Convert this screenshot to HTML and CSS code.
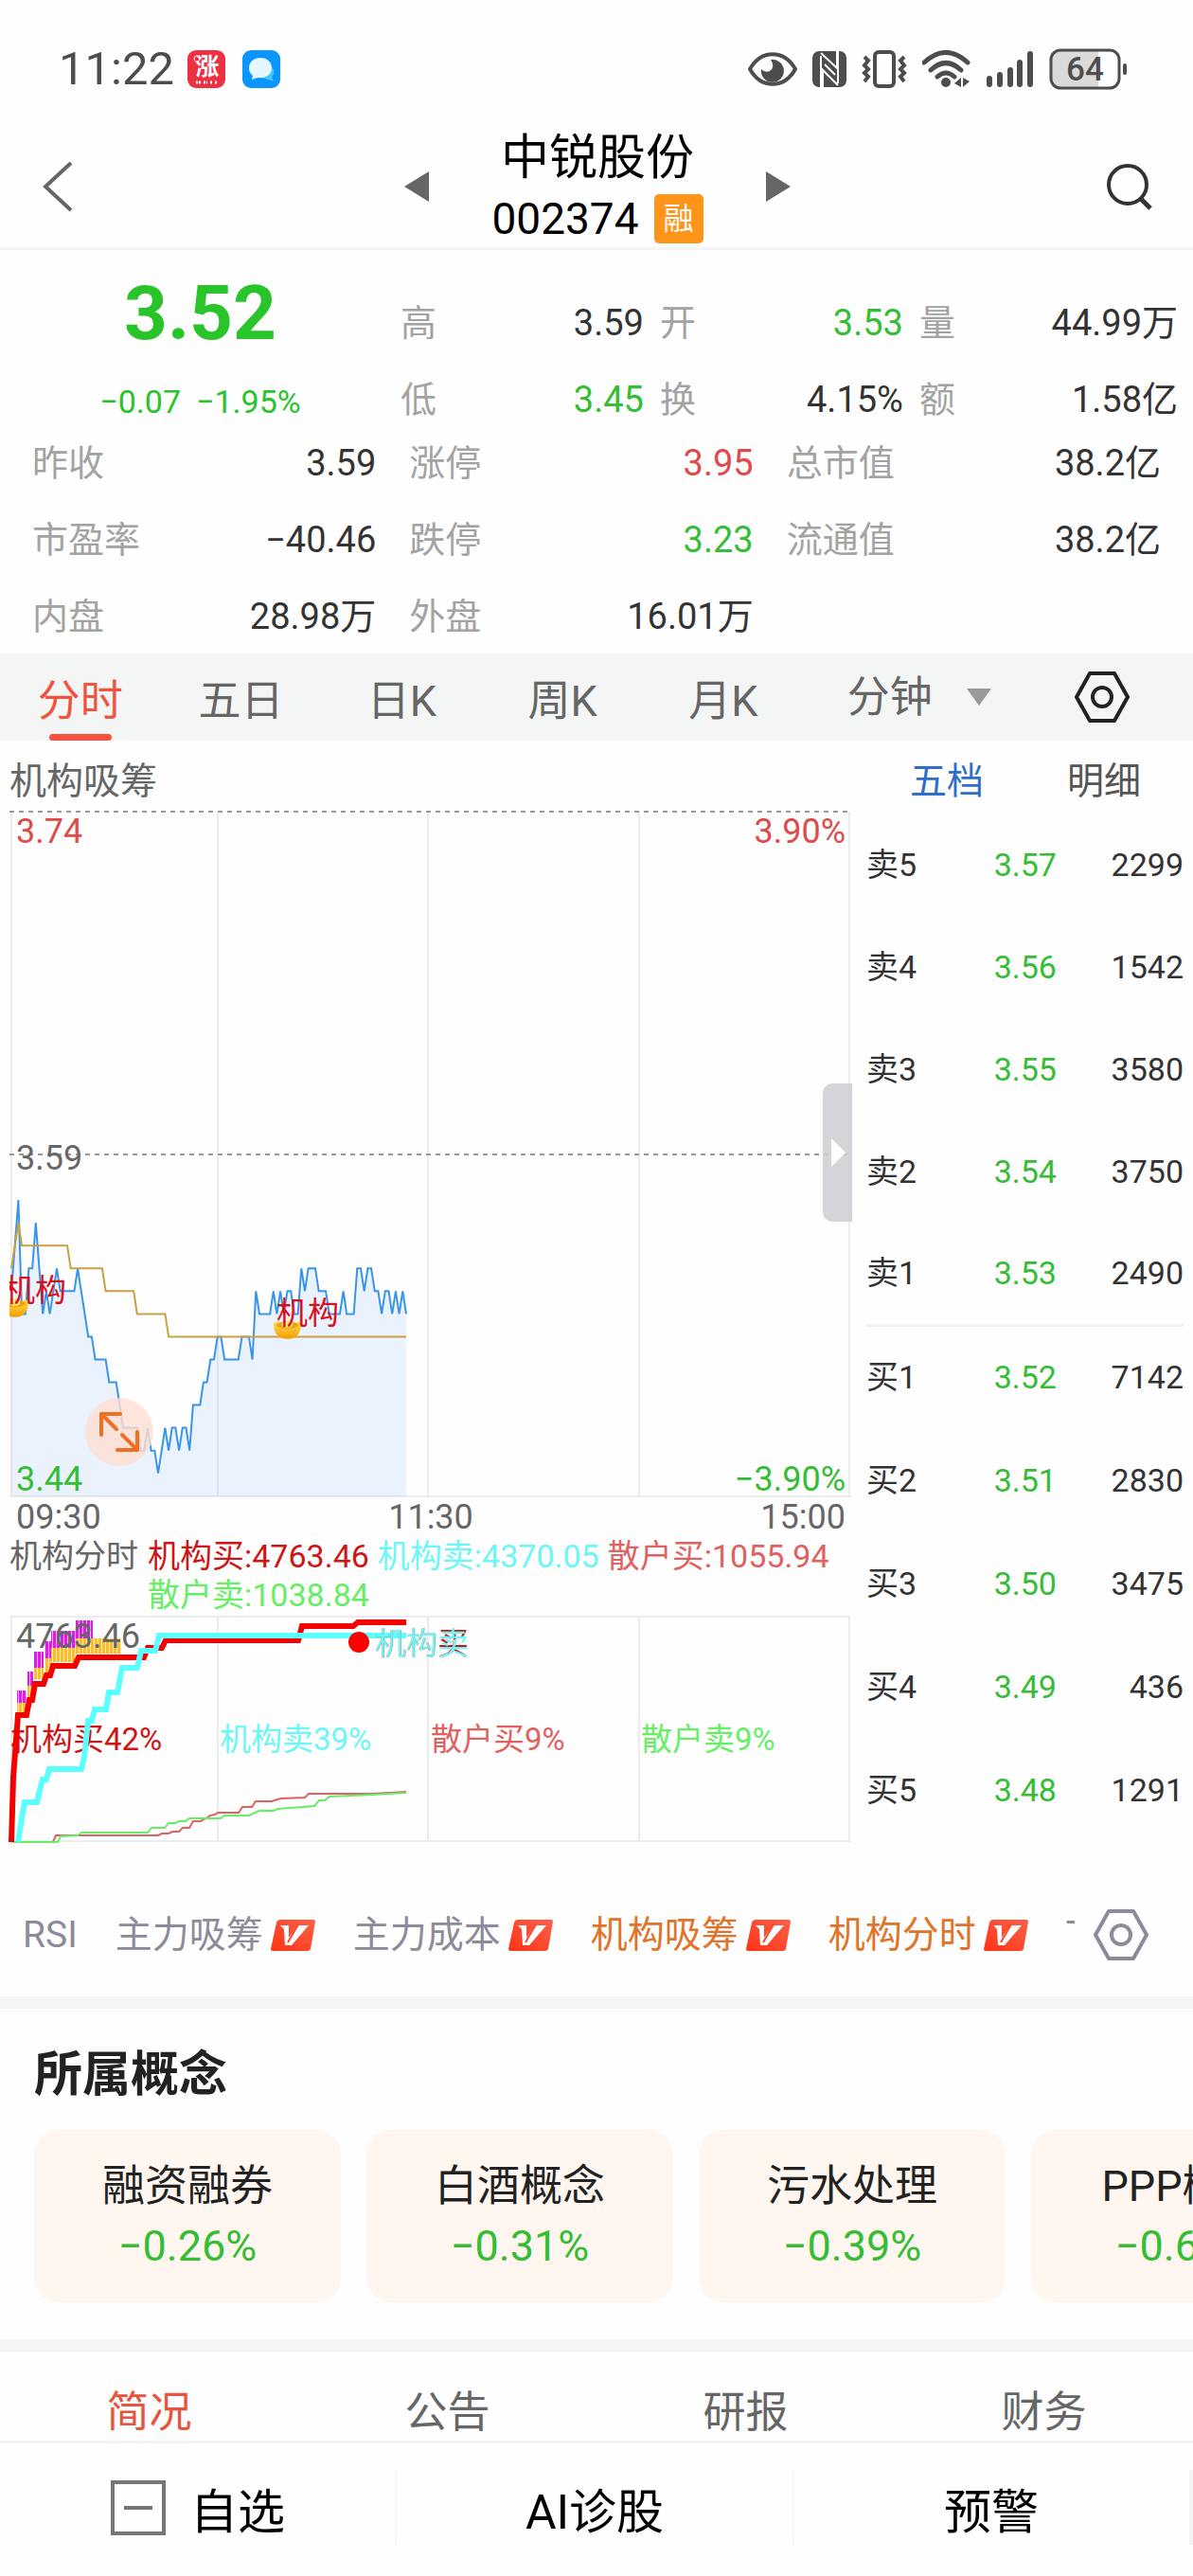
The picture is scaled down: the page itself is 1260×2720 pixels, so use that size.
FILE: index.html
```html
<!DOCTYPE html>
<html lang="zh-CN">
<head>
    <meta charset="UTF-8">
    <meta name="viewport" content="width=device-width, initial-scale=1.0">
    <title>中锐股份 002374</title>
    <link rel="stylesheet" href="styles.css">
</head>
<body>
    <svg width="0" height="0" class="defs" aria-hidden="true">
        <defs>
            <linearGradient id="vipFill" x1="0" y1="1" x2="1" y2="0">
                <stop offset="0" stop-color="#ff3315"/>
                <stop offset="1" stop-color="#fb6148"/>
            </linearGradient>
            <linearGradient id="gold" x1="0" y1="0" x2="0" y2="1">
                <stop offset="0" stop-color="#ffe04a"/>
                <stop offset="1" stop-color="#f59a00"/>
            </linearGradient>
            <symbol id="vip" viewBox="0 0 47 33">
                <path d="M10 0H45Q47 0 47 2L42 31Q41 33 39 33H2Q0 33 0 31L6 3Q7 0 10 0Z" fill="url(#vipFill)"/>
                <path d="M10 6H19V19L28 6H40L22 27H15L14 10Z" fill="#fff"/>
                <path d="M29 5L18 24" stroke="#fd452b" stroke-width="2"/>
            </symbol>
            <symbol id="hexagon" viewBox="0 0 60 56">
                <path d="M17 3H43L57 28L43 53H17L3 28Z" fill="none" stroke="currentColor" stroke-width="4" stroke-linejoin="round"/>
                <circle cx="30" cy="28" r="10" fill="none" stroke="currentColor" stroke-width="4"/>
            </symbol>
            <symbol id="ingot" viewBox="0 0 32 22">
                <path d="M1 4Q3 1 8 4H24Q29 1 31 4Q31 21 16 21Q1 21 1 4Z" fill="url(#gold)"/>
                <ellipse cx="16" cy="6" rx="12" ry="4" fill="#f0a312"/>
                <ellipse cx="16" cy="5" rx="6" ry="4" fill="#ffe873"/>
            </symbol>
        </defs>
    </svg>

    <div class="status-bar">
        <span class="status-time">11:22</span>
        <svg class="app-icon" viewBox="0 0 40 40" aria-hidden="true">
            <rect width="40" height="40" rx="9" fill="#ee3142"/>
            <text x="21" y="26" class="app-char">涨</text>
            <path d="M9 34H14M17 34H21M24 34H27M29 34H32" stroke="#fff" stroke-width="3" stroke-dasharray="2 1"/>
            <circle cx="10" cy="9" r="3" fill="none" stroke="#fff"/>
        </svg>
        <svg class="app-icon" viewBox="0 0 40 40" aria-hidden="true">
            <rect width="40" height="40" rx="9" fill="#0a95ff"/>
            <path d="M21 29Q31 32 33 33L31 28Q36 23 31 18Z" fill="#3fc8f8"/>
            <path d="M19 8C11 8 7 13 7 19C7 23 9 25 11 27L10 31L16 29C26 30 31 25 31 19C31 12 26 8 19 8Z" fill="#e4f7ff"/>
        </svg>
        <div class="status-icons">
            <svg width="52" height="36" viewBox="0 0 52 36" aria-hidden="true">
                <path d="M2 18C14-3 38-3 50 18C38 39 14 39 2 18Z" fill="none" stroke="#4d4d4d" stroke-width="4"/>
                <path d="M24 8A12 12 0 1 1 14 18Q18 22 23 20Q29 16 24 8Z" fill="#4d4d4d"/>
            </svg>
            <svg width="36" height="38" viewBox="0 0 36 38" aria-hidden="true">
                <rect width="36" height="38" rx="7" fill="#4d4d4d"/>
                <path d="M9 38V5M9 2L26 18V0M27 36L11 20V38M27 0V34" fill="none" stroke="#fefefe" stroke-width="2"/>
                <path d="M13 14L24 25" stroke="#fefefe" stroke-width="2"/>
            </svg>
            <svg width="48" height="40" viewBox="0 0 48 40" aria-hidden="true">
                <rect x="14" y="2" width="20" height="36" rx="4" fill="none" stroke="#4d4d4d" stroke-width="4"/>
                <path d="M3 7L7 11L3 16L7 20L3 24L7 28L3 33M45 7L41 11L45 16L41 20L45 24L41 28L45 33" fill="none" stroke="#4d4d4d" stroke-width="4"/>
            </svg>
            <svg width="52" height="40" viewBox="0 0 52 40" aria-hidden="true">
                <path d="M2 13Q25-8 48 13M9 21Q25 6 41 21M16 28Q25 20 34 28" fill="none" stroke="#4d4d4d" stroke-width="5" stroke-linecap="round"/>
                <circle cx="25" cy="34" r="5" fill="#4d4d4d"/>
                <path d="M34 35L41 29V39ZM50 33L43 29V39Z" fill="#4d4d4d"/>
            </svg>
            <svg width="50" height="40" viewBox="0 0 50 40" aria-hidden="true">
                <path d="M3 30V36M14 26V36M25 21V36M35 13V36M46 4V36" stroke="#4d4d4d" stroke-width="6" stroke-linecap="round"/>
            </svg>
            <svg width="84" height="44" viewBox="0 0 84 44" aria-hidden="true">
                <path d="M10 2H52V42H10Q2 42 2 34V10Q2 2 10 2Z" fill="#dadada"/>
                <rect x="2" y="2" width="72" height="40" rx="10" fill="none" stroke="#4d4d4d" stroke-width="3"/>
                <path d="M80 18V26" stroke="#4d4d4d" stroke-width="4" stroke-linecap="round"/>
                <text x="38" y="34" class="battery-text">64</text>
            </svg>
        </div>
    </div>

    <header class="header">
        <button class="icon-btn" aria-label="返回">
            <svg width="34" height="54" viewBox="0 0 34 54"><path d="M31 2L4 27L31 52" fill="none" stroke="#666" stroke-width="4"/></svg>
        </button>
        <div class="header-center">
            <button class="icon-btn" aria-label="上一只">
                <svg width="26" height="32" viewBox="0 0 26 32"><path d="M0 16L26 0V32Z" fill="#666"/></svg>
            </button>
            <div class="header-title">
                <h1>中锐股份</h1>
                <div class="stock-code">002374 <span class="rong">融</span></div>
            </div>
            <button class="icon-btn" aria-label="下一只">
                <svg width="26" height="32" viewBox="0 0 26 32"><path d="M26 16L0 0V32Z" fill="#666"/></svg>
            </button>
        </div>
        <button class="icon-btn search-btn" aria-label="搜索">
            <svg width="50" height="52" viewBox="0 0 50 52"><circle cx="23" cy="24" r="20" fill="none" stroke="#333" stroke-width="4"/><path d="M36 38L47 49" stroke="#333" stroke-width="5"/></svg>
        </button>
    </header>

    <section class="quote">
        <div class="quote-top">
            <div class="price-box">
                <div class="price">3.52</div>
                <div class="change"><span>−0.07</span><span>−1.95%</span></div>
            </div>
            <dl class="stats stats-top">
                <div><dt>高</dt><dd>3.59</dd></div>
                <div><dt>开</dt><dd class="down">3.53</dd></div>
                <div><dt>量</dt><dd>44.99万</dd></div>
                <div><dt>低</dt><dd class="down">3.45</dd></div>
                <div><dt>换</dt><dd>4.15%</dd></div>
                <div><dt>额</dt><dd>1.58亿</dd></div>
            </dl>
        </div>
        <dl class="stats stats-more">
            <div><dt>昨收</dt><dd>3.59</dd></div>
            <div><dt>涨停</dt><dd class="up">3.95</dd></div>
            <div><dt>总市值</dt><dd>38.2亿</dd></div>
            <div><dt>市盈率</dt><dd>−40.46</dd></div>
            <div><dt>跌停</dt><dd class="down">3.23</dd></div>
            <div><dt>流通值</dt><dd>38.2亿</dd></div>
            <div><dt>内盘</dt><dd>28.98万</dd></div>
            <div><dt>外盘</dt><dd>16.01万</dd></div>
        </dl>
    </section>

    <nav class="period-tabs">
        <button class="active">分时</button>
        <button>五日</button>
        <button>日K</button>
        <button>周K</button>
        <button>月K</button>
        <div class="minute-select">
            <select aria-label="分钟周期">
                <option>分钟</option>
            </select>
            <svg width="26" height="18" viewBox="0 0 26 18" aria-hidden="true"><path d="M0 0H26L13 18Z" fill="#999"/></svg>
        </div>
        <button class="period-setting" aria-label="设置"><svg width="60" height="56"><use href="#hexagon"/></svg></button>
    </nav>

    <main class="trade">
        <div class="charts">
            <h2 class="chart-title">机构吸筹</h2>
            <div class="main-chart">
                <svg viewBox="0 0 900 773" role="img" aria-label="分时走势">
                    <path class="grid-line" d="M12 7V730M230 7V730M452 7V730M675 7V730M897 7V730M10 730H899"/>
                    <path class="dash-line" d="M10 7H897M10 369H897"/>
                    <path id="priceArea" class="price-area"/>
                    <path id="priceLine" class="price-line"/>
                    <path id="avgLine" class="avg-line"/>
                    <svg x="10" y="480" width="100" height="80" viewBox="10 480 100 80">
                        <use href="#ingot" x="0" y="520" width="31" height="22"/>
                        <text x="4" y="524" class="mark">机构</text>
                    </svg>
                    <use href="#ingot" x="288" y="543" width="31" height="22"/>
                    <text x="292" y="548" class="mark">机构</text>
                    <text x="17" y="40" class="axis up-text">3.74</text>
                    <text x="893" y="40" class="axis up-text end">3.90%</text>
                    <text x="17" y="385" class="axis">3.59</text>
                    <text x="17" y="724" class="axis down-text">3.44</text>
                    <text x="893" y="724" class="axis down-text end">−3.90%</text>
                    <text x="17" y="764" class="axis">09:30</text>
                    <text x="455" y="764" class="axis middle">11:30</text>
                    <text x="893" y="764" class="axis end">15:00</text>
                </svg>
                <button class="expand-btn" aria-label="全屏">
                    <svg width="44" height="44" viewBox="0 0 44 44"><path d="M3 25V3H23M3 3L19 19M41 22V41H20M25 25L41 41" fill="none" stroke="#ee7020" stroke-width="4" stroke-linecap="round" stroke-linejoin="round"/></svg>
                </button>
                <button class="fold-btn" aria-label="收起盘口">
                    <svg width="15" height="30" viewBox="0 0 15 30"><path d="M0 0L15 15L0 30Z" fill="#fff"/></svg>
                </button>
            </div>
            <div class="legend">
                <span class="legend-name">机构分时</span>
                <div class="legend-values">
                    <span class="inst-buy">机构买:4763.46</span>
                    <span class="inst-sell">机构卖:4370.05</span>
                    <span class="retail-buy">散户买:1055.94</span>
                    <span class="retail-sell">散户卖:1038.84</span>
                </div>
            </div>
            <svg class="sub-chart" viewBox="0 0 900 245" role="img" aria-label="机构分时">
                <defs>
                    <pattern id="yellowBars" width="4" height="10" patternUnits="userSpaceOnUse">
                        <rect width="4" height="10" fill="#fff0b8"/><rect width="3" height="10" fill="#f6bf32"/>
                    </pattern>
                    <pattern id="pinkBars" width="4" height="10" patternUnits="userSpaceOnUse">
                        <rect width="4" height="10" fill="#fbb8ff"/><rect width="3" height="10" fill="#d91fe0"/>
                    </pattern>
                </defs>
                <path class="grid-line" d="M10 2H899M12 2V239M230 2V239M452 2V239M675 2V239M897 2V239M10 239H899"/>
                <path fill="url(#yellowBars)" d="M18 93H28V103H18ZM29 75H35V87H29ZM36 56H46V68H36ZM47 46H54V61H47ZM54 35H80V50H54ZM80 25H128V41H80Z"/>
                <path fill="url(#pinkBars)" d="M18 80H28V93H18ZM29 60H35V75H29ZM36 39H46V56H36ZM47 28H54V46H47ZM54 17H80V35H54ZM80 6H98V25H80Z"/>
                <text x="11" y="143" class="share inst-buy">机构买42%</text>
                <text x="232" y="143" class="share inst-sell">机构卖39%</text>
                <text x="455" y="143" class="share retail-buy">散户买9%</text>
                <text x="677" y="143" class="share retail-sell">散户卖9%</text>
                <path class="line-thin retail-buy" d="M12 240H56L59 233H167L171 231H178L182 229H189L193 225H200L204 218H212L215 216L218 215L222 212L227 211L230 209H252L256 203H266L270 197H287L293 195L297 194L322 193L326 189H393L429 187"/>
                <path class="line-thin retail-sell" d="M12 240H61L64 234L82 233L86 230H156L160 225H174L178 220H185L189 218H196L200 215H233L237 212H263L274 207H289L293 205L320 203L332 202L337 196H343L348 192L393 190L429 188"/>
                <path class="line-thick red" d="M12 240L14 172L19 106H28L31 90H34L37 73H46L49 64H53L56 54H79L83 45H152L156 35H171L175 27H315L319 12H373L378 8H429"/>
                <path class="line-thick cyan" d="M19 240L23 215L26 198H39L42 185L45 174H49L52 163H86L89 150L93 112H97L100 100H112L115 82H124L129 56H145L149 38H164L168 22H429"/>
                <text x="17" y="35" class="axis">4763.46</text>
                <circle cx="379" cy="29" r="11" fill="#f00"/>
                <text x="396" y="42" class="share inst-buy">机构买</text>
                <text x="396" y="42" class="share inst-sell">机构卖</text>
            </svg>
        </div>

        <aside class="book">
            <div class="book-tabs">
                <button class="active">五档</button>
                <button>明细</button>
            </div>
            <table>
                <tbody class="asks">
                    <tr><th>卖5</th><td class="down">3.57</td><td>2299</td></tr>
                    <tr><th>卖4</th><td class="down">3.56</td><td>1542</td></tr>
                    <tr><th>卖3</th><td class="down">3.55</td><td>3580</td></tr>
                    <tr><th>卖2</th><td class="down">3.54</td><td>3750</td></tr>
                    <tr><th>卖1</th><td class="down">3.53</td><td>2490</td></tr>
                </tbody>
                <tbody class="bids">
                    <tr><th>买1</th><td class="down">3.52</td><td>7142</td></tr>
                    <tr><th>买2</th><td class="down">3.51</td><td>2830</td></tr>
                    <tr><th>买3</th><td class="down">3.50</td><td>3475</td></tr>
                    <tr><th>买4</th><td class="down">3.49</td><td>436</td></tr>
                    <tr><th>买5</th><td class="down">3.48</td><td>1291</td></tr>
                </tbody>
            </table>
        </aside>
    </main>

    <nav class="indicators">
        <div class="indicator-list">
            <button>RSI</button>
            <button>主力吸筹<svg width="47" height="33"><use href="#vip"/></svg></button>
            <button>主力成本<svg width="47" height="33"><use href="#vip"/></svg></button>
            <button class="active">机构吸筹<svg width="47" height="33"><use href="#vip"/></svg></button>
            <button class="active">机构分时<svg width="47" height="33"><use href="#vip"/></svg></button>
            <button>T</button>
        </div>
        <button class="icon-btn indicator-setting" aria-label="指标设置"><svg width="60" height="56"><use href="#hexagon"/></svg></button>
    </nav>

    <section class="concepts">
        <h2>所属概念</h2>
        <div class="concept-list">
            <a href="#" class="concept"><span>融资融券</span><span class="rate">−0.26%</span></a>
            <a href="#" class="concept"><span>白酒概念</span><span class="rate">−0.31%</span></a>
            <a href="#" class="concept"><span>污水处理</span><span class="rate">−0.39%</span></a>
            <a href="#" class="concept"><span>PPP概念</span><span class="rate">−0.60%</span></a>
        </div>
    </section>

    <nav class="info-tabs">
        <button class="active">简况</button>
        <button>公告</button>
        <button>研报</button>
        <button>财务</button>
    </nav>

    <footer class="bottom-bar">
        <button>
            <svg width="58" height="58" viewBox="0 0 58 58" aria-hidden="true"><path d="M2 2H56V56H2ZM14 29H44" fill="none" stroke="#777" stroke-width="4"/></svg>
            自选
        </button>
        <button>AI诊股</button>
        <button>预警</button>
    </footer>

    <script src="chart.js"></script>
</body>
</html>
```

FILE: styles.css
```css
* {
    box-sizing: border-box;
}
body {
    margin: 0;
    background-color: #fefefe;
    color: #333;
    font-family: Roboto, "Noto Sans CJK SC", sans-serif;
    font-size: 38px;
    overflow-x: hidden;
}
h1, h2, dl, dd {
    margin: 0;
    font-weight: 400;
}
button, select {
    padding: 0;
    border: none;
    background: none;
    color: inherit;
    font: inherit;
    cursor: pointer;
}
svg {
    display: block;
    flex-shrink: 0;
}
.defs {
    position: absolute;
}
.icon-btn {
    display: flex;
}
.up {
    color: #dd4b4b;
}
.down {
    color: #35bd35;
}

/* status bar */
.status-bar {
    display: flex;
    align-items: center;
    height: 110px;
    padding: 36px 68px 0 62px;
}
.status-time {
    margin-right: 14px;
    font-size: 49px;
    line-height: 48px;
    color: #4d4d4d;
}
.app-icon {
    width: 40px;
    height: 40px;
    margin-right: 18px;
}
.app-char {
    fill: #fff;
    font-size: 25px;
    font-weight: 700;
    text-anchor: middle;
}
.status-icons {
    display: flex;
    align-items: center;
    gap: 16px;
    margin-left: auto;
}
.battery-text {
    fill: #4d4d4d;
    font-size: 35px;
    font-weight: 500;
    text-anchor: middle;
}

/* header */
.header {
    display: grid;
    grid-template-columns: 1fr auto 1fr;
    align-items: center;
    padding: 27px 42px 4px 44px;
    border-bottom: 3px solid #f3f5f5;
    color: #000;
}
.header-center {
    display: flex;
    align-items: center;
    gap: 66px;
}
.header-title {
    display: flex;
    flex-direction: column;
    align-items: center;
    gap: 8px;
}
.header-title h1 {
    font-size: 51px;
    line-height: 60px;
}
.stock-code {
    display: flex;
    gap: 16px;
    font-size: 46px;
    line-height: 52px;
}
.rong {
    width: 52px;
    border-radius: 5px;
    background-color: #ff9518;
    color: #fff;
    font-size: 32px;
    text-align: center;
}
.search-btn {
    justify-self: end;
}

/* quote */
.quote {
    padding: 27px 0 11px;
}
.quote-top {
    display: flex;
    align-items: flex-end;
    padding-right: 16px;
}
.price-box {
    flex: 0 0 34%;
    padding-bottom: 6px;
    text-align: center;
    color: #29c429;
}
.price {
    font-size: 80px;
    font-weight: 700;
    line-height: 80px;
    margin-bottom: 33px;
}
.change {
    display: flex;
    justify-content: center;
    gap: 16px;
    font-size: 34px;
    line-height: 40px;
}
.stats {
    display: grid;
    line-height: 56px;
}
.stats > div {
    display: flex;
    justify-content: space-between;
}
.stats dt {
    color: #a3a3a3;
}
.stats-top {
    flex: 1;
    grid-template-columns: 256fr 256fr 272fr;
    gap: 25px 17px;
}
.stats-more {
    grid-template-columns: 363fr 363fr 395fr;
    gap: 25px 35px;
    margin-top: 11px;
    padding: 0 34px;
}

/* period tabs */
.period-tabs {
    display: flex;
    align-items: stretch;
    height: 92px;
    padding-right: 66px;
    background-color: #f4f6f6;
    color: #666;
    font-size: 45px;
}
.period-tabs > button {
    position: relative;
    flex: 171;
}
.period-tabs .active {
    color: #ee5440;
}
.period-tabs .active::after {
    content: "";
    position: absolute;
    left: calc(50% - 33px);
    bottom: 0;
    width: 66px;
    height: 7px;
    border-radius: 4px;
    background-color: #fa5240;
}
.minute-select {
    flex: 241;
    display: flex;
    align-items: center;
    gap: 34px;
    padding-left: 46px;
}
.minute-select select {
    width: 92px;
    height: 92px;
    appearance: none;
}
.period-tabs .period-setting {
    flex: 0 0 60px;
    color: #222;
}

/* charts and order book */
.trade {
    display: grid;
    grid-template-columns: 900fr 360fr;
}
.charts {
    min-width: 0;
}
.chart-title {
    padding: 18px 10px 0;
    font-size: 39px;
    line-height: 50px;
    color: #666;
}
.main-chart {
    position: relative;
}
.main-chart > svg, .sub-chart {
    width: 100%;
    height: auto;
}
.grid-line {
    fill: none;
    stroke: #ececee;
    stroke-width: 2;
}
.dash-line {
    fill: none;
    stroke: #999;
    stroke-width: 2;
    stroke-dasharray: 5 5;
}
.price-area {
    fill: #4a90f5;
    fill-opacity: 0.11;
}
.price-line, .avg-line {
    fill: none;
    stroke: #3a95e8;
    stroke-width: 2;
}
.avg-line {
    stroke: #c9a240;
}
.axis {
    fill: #666;
    font-size: 36px;
}
.up-text {
    fill: #dd4b4b;
}
.down-text {
    fill: #35bd35;
}
.end {
    text-anchor: end;
}
.middle {
    text-anchor: middle;
}
.mark, .share {
    font-size: 33px;
}
.mark {
    fill: #d9101c;
}
.expand-btn {
    position: absolute;
    left: 10%;
    top: 81%;
    display: flex;
    align-items: center;
    justify-content: center;
    width: 72px;
    height: 72px;
    border-radius: 50%;
    background-color: rgba(255, 222, 210, 0.8);
}
.fold-btn {
    position: absolute;
    right: 0;
    top: 38%;
    display: flex;
    align-items: center;
    padding-left: 9px;
    width: 31px;
    height: 146px;
    border-radius: 10px 0 0 10px;
    background-color: rgba(205, 204, 210, 0.85);
}
.legend {
    display: flex;
    gap: 10px;
    padding-left: 10px;
    font-size: 34px;
    line-height: 41px;
    color: #666;
}
.legend-name {
    flex-shrink: 0;
}
.legend-values {
    display: flex;
    flex-wrap: wrap;
    column-gap: 9px;
}
.inst-buy {
    color: #cf1414;
    fill: #cf1414;
}
.inst-sell {
    color: #6bf7f7;
    fill: #6bf7f7;
}
.retail-buy {
    color: #e36060;
    fill: #e36060;
}
.retail-sell {
    color: #66ee66;
    fill: #66ee66;
}
.line-thin {
    fill: none;
    stroke: currentColor;
    stroke-width: 2;
}
.line-thick {
    fill: none;
    stroke-width: 6;
}
.red {
    stroke: #f50000;
}
.cyan {
    stroke: #5cffff;
}
.book {
    padding: 0 10px 0 15px;
}
.book-tabs {
    display: flex;
    gap: 88px;
    padding: 18px 0 9px 46px;
    font-size: 39px;
    line-height: 50px;
    color: #555;
}
.book-tabs .active {
    color: #2f6fc9;
}
.book table {
    width: 100%;
    border-collapse: collapse;
    font-size: 34px;
    line-height: 40px;
}
.book tr {
    height: 108px;
}
.book .bids tr {
    height: 109px;
}
.asks {
    border-bottom: 3px solid #f3f3f3;
}
.book th, .book td {
    padding: 0;
    width: 33%;
    font-weight: 400;
    text-align: right;
}
.book th {
    text-align: left;
}
.book td:nth-child(2) {
    width: 27%;
}
.book td:last-child {
    width: 40%;
}

/* indicators */
.indicators {
    display: flex;
    align-items: center;
    justify-content: space-between;
    padding: 28px 46px 0 24px;
    height: 158px;
    color: #8d8b99;
}
.indicator-list {
    display: flex;
    gap: 40px;
    min-width: 0;
    margin-right: 19px;
    overflow: hidden;
}
.indicator-list button {
    display: flex;
    align-items: center;
    gap: 8px;
    flex-shrink: 0;
    font-size: 39px;
    line-height: 56px;
}
.indicator-list .active {
    color: #e0742a;
}

/* concepts */
.concepts {
    padding: 40px 0 39px 36px;
    border-top: 13px solid #f4f6f6;
    border-bottom: 13px solid #f4f6f6;
    color: #222;
    overflow: hidden;
}
.concepts h2 {
    font-size: 51px;
    font-weight: 700;
    line-height: 60px;
    margin-bottom: 28px;
}
.concept-list {
    display: flex;
    gap: 27px;
}
.concept {
    display: flex;
    flex-direction: column;
    align-items: center;
    flex: 0 0 324px;
    padding: 28px 0;
    border-radius: 26px;
    background-color: #fff6f0;
    color: inherit;
    font-size: 45px;
    line-height: 63px;
    text-decoration: none;
}
.rate {
    color: #35bd35;
}

/* info tabs */
.info-tabs {
    display: flex;
    padding: 36px 0 0;
    border-bottom: 3px solid #f3f5f5;
    font-size: 45px;
    line-height: 58px;
    color: #666;
}
.info-tabs button {
    flex: 1;
}
.info-tabs .active {
    color: #e5553f;
}

/* bottom bar */
.bottom-bar {
    display: flex;
    padding: 28px 0 32px;
    color: #000;
    font-size: 50px;
}
.bottom-bar button {
    flex: 1;
    display: flex;
    align-items: center;
    justify-content: center;
    gap: 26px;
    height: 79px;
    border-right: 1px solid #f4f4f4;
}
.bottom-bar button:last-child {
    border-right: 4px solid #f4f4f4;
}
```

FILE: chart.js
```javascript
// price per minute from 09:30, in cents
const prices = [
    353, 355, 357, 352, 352, 354, 354, 356, 354, 352, 353, 352, 353, 354, 353, 353, 353, 353, 353, 354,
    353, 352, 351, 351, 350, 350, 350, 350, 349, 349, 349, 348, 347, 347, 347, 347, 347, 346, 346, 347,
    346, 346, 345, 346, 347, 346, 347, 347, 346, 347, 347, 346, 348, 348, 348, 349, 349, 350, 350, 351,
    351, 350, 350, 350, 350, 350, 351, 351, 351, 350, 353, 352, 352, 352, 352, 353, 352, 353, 352, 353,
    353, 352, 352, 354, 353, 354, 354, 354, 353, 353, 353, 352, 352, 352, 352, 353, 352, 352, 352, 354,
    354, 353, 354, 354, 353, 353, 352, 353, 353, 352, 353, 352, 353, 352
];
// average price, only the minutes where it turns
const averages = [
    [0, 354], [2, 356], [3, 355], [16, 355], [17, 354], [26, 354], [27, 353],
    [35, 353], [36, 352], [44, 352], [45, 351], [113, 351]
];

const PREV_CLOSE = 359;

function x(minute) {
    return (12 + minute * 3.69).toFixed(1);
}

function y(price) {
    return (369 + (PREV_CLOSE - price) * 24.05).toFixed(1);
}

const line = 'M' + prices.map((p, i) => x(i) + ' ' + y(p)).join('L');

document.getElementById('priceLine').setAttribute('d', line);
document.getElementById('priceArea').setAttribute('d', line + 'V730H12Z');
document.getElementById('avgLine').setAttribute('d', 'M' + averages.map(([m, p]) => x(m) + ' ' + y(p)).join('L'));
```
